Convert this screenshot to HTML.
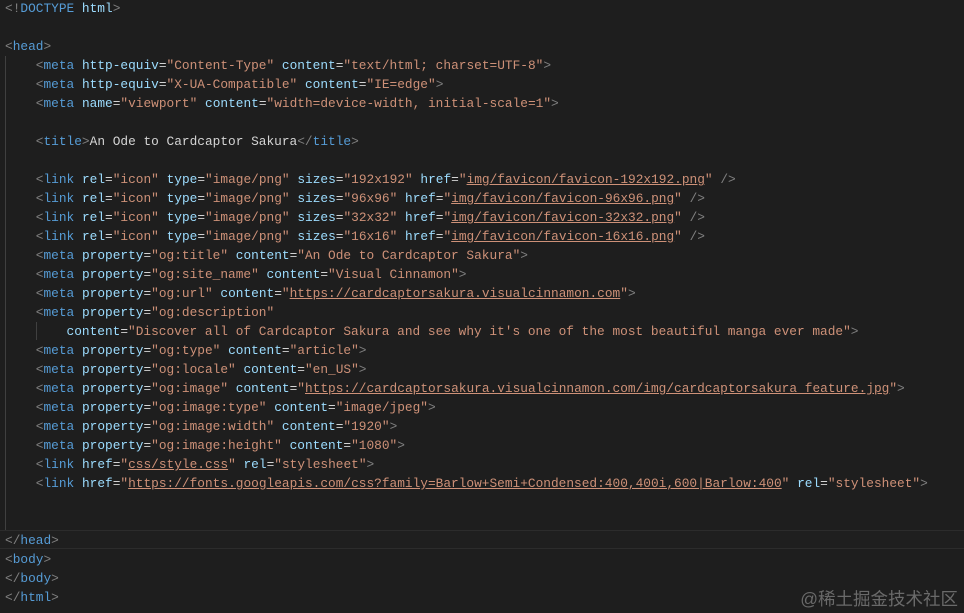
<!DOCTYPE html>
<html><head><meta charset="utf-8"><style>
html,body{margin:0;padding:0;background:#1e1e1e;width:964px;height:613px;overflow:hidden;position:relative}
pre{margin:0;position:absolute;left:5px;top:-1px;font-family:"Liberation Mono",monospace;font-size:12.82px;line-height:19px;color:#d4d4d4;white-space:pre}
.b{color:#808080}.t{color:#569cd6}.a{color:#9cdcfe}.s{color:#ce9178}.u{text-decoration:underline;text-decoration-color:#ce9178}
.g1{position:absolute;left:5px;top:56px;width:1px;height:474px;background:#404040}
.g2{position:absolute;left:36px;top:322px;width:1px;height:18px;background:#404040}
.cl{position:absolute;left:0;top:530px;width:964px;height:17px;border-top:1px solid #2c2c2c;border-bottom:1px solid #2c2c2c;background:#1f1f1f}
.wm{position:absolute;right:6px;top:586px;font-family:"Liberation Sans","Noto Sans CJK SC",sans-serif;font-size:17.5px;color:#6a6a6a}
</style></head><body>
<div class="cl"></div><div class="g1"></div><div class="g2"></div>
<pre><span class="b">&lt;!</span><span class="t">DOCTYPE</span> <span class="a">html</span><span class="b">&gt;</span>

<span class="b">&lt;</span><span class="t">head</span><span class="b">&gt;</span>
    <span class="b">&lt;</span><span class="t">meta</span> <span class="a">http-equiv</span>=<span class="s">"Content-Type"</span> <span class="a">content</span>=<span class="s">"text/html; charset=UTF-8"</span><span class="b">&gt;</span>
    <span class="b">&lt;</span><span class="t">meta</span> <span class="a">http-equiv</span>=<span class="s">"X-UA-Compatible"</span> <span class="a">content</span>=<span class="s">"IE=edge"</span><span class="b">&gt;</span>
    <span class="b">&lt;</span><span class="t">meta</span> <span class="a">name</span>=<span class="s">"viewport"</span> <span class="a">content</span>=<span class="s">"width=device-width, initial-scale=1"</span><span class="b">&gt;</span>

    <span class="b">&lt;</span><span class="t">title</span><span class="b">&gt;</span>An Ode to Cardcaptor Sakura<span class="b">&lt;/</span><span class="t">title</span><span class="b">&gt;</span>

    <span class="b">&lt;</span><span class="t">link</span> <span class="a">rel</span>=<span class="s">"icon"</span> <span class="a">type</span>=<span class="s">"image/png"</span> <span class="a">sizes</span>=<span class="s">"192x192"</span> <span class="a">href</span>=<span class="s">"<span class="u">img/favicon/favicon-192x192.png</span>"</span> <span class="b">/&gt;</span>
    <span class="b">&lt;</span><span class="t">link</span> <span class="a">rel</span>=<span class="s">"icon"</span> <span class="a">type</span>=<span class="s">"image/png"</span> <span class="a">sizes</span>=<span class="s">"96x96"</span> <span class="a">href</span>=<span class="s">"<span class="u">img/favicon/favicon-96x96.png</span>"</span> <span class="b">/&gt;</span>
    <span class="b">&lt;</span><span class="t">link</span> <span class="a">rel</span>=<span class="s">"icon"</span> <span class="a">type</span>=<span class="s">"image/png"</span> <span class="a">sizes</span>=<span class="s">"32x32"</span> <span class="a">href</span>=<span class="s">"<span class="u">img/favicon/favicon-32x32.png</span>"</span> <span class="b">/&gt;</span>
    <span class="b">&lt;</span><span class="t">link</span> <span class="a">rel</span>=<span class="s">"icon"</span> <span class="a">type</span>=<span class="s">"image/png"</span> <span class="a">sizes</span>=<span class="s">"16x16"</span> <span class="a">href</span>=<span class="s">"<span class="u">img/favicon/favicon-16x16.png</span>"</span> <span class="b">/&gt;</span>
    <span class="b">&lt;</span><span class="t">meta</span> <span class="a">property</span>=<span class="s">"og:title"</span> <span class="a">content</span>=<span class="s">"An Ode to Cardcaptor Sakura"</span><span class="b">&gt;</span>
    <span class="b">&lt;</span><span class="t">meta</span> <span class="a">property</span>=<span class="s">"og:site_name"</span> <span class="a">content</span>=<span class="s">"Visual Cinnamon"</span><span class="b">&gt;</span>
    <span class="b">&lt;</span><span class="t">meta</span> <span class="a">property</span>=<span class="s">"og:url"</span> <span class="a">content</span>=<span class="s">"<span class="u">https://cardcaptorsakura.visualcinnamon.com</span>"</span><span class="b">&gt;</span>
    <span class="b">&lt;</span><span class="t">meta</span> <span class="a">property</span>=<span class="s">"og:description"</span>
        <span class="a">content</span>=<span class="s">"Discover all of Cardcaptor Sakura and see why it's one of the most beautiful manga ever made"</span><span class="b">&gt;</span>
    <span class="b">&lt;</span><span class="t">meta</span> <span class="a">property</span>=<span class="s">"og:type"</span> <span class="a">content</span>=<span class="s">"article"</span><span class="b">&gt;</span>
    <span class="b">&lt;</span><span class="t">meta</span> <span class="a">property</span>=<span class="s">"og:locale"</span> <span class="a">content</span>=<span class="s">"en_US"</span><span class="b">&gt;</span>
    <span class="b">&lt;</span><span class="t">meta</span> <span class="a">property</span>=<span class="s">"og:image"</span> <span class="a">content</span>=<span class="s">"<span class="u">https://cardcaptorsakura.visualcinnamon.com/img/cardcaptorsakura_feature.jpg</span>"</span><span class="b">&gt;</span>
    <span class="b">&lt;</span><span class="t">meta</span> <span class="a">property</span>=<span class="s">"og:image:type"</span> <span class="a">content</span>=<span class="s">"image/jpeg"</span><span class="b">&gt;</span>
    <span class="b">&lt;</span><span class="t">meta</span> <span class="a">property</span>=<span class="s">"og:image:width"</span> <span class="a">content</span>=<span class="s">"1920"</span><span class="b">&gt;</span>
    <span class="b">&lt;</span><span class="t">meta</span> <span class="a">property</span>=<span class="s">"og:image:height"</span> <span class="a">content</span>=<span class="s">"1080"</span><span class="b">&gt;</span>
    <span class="b">&lt;</span><span class="t">link</span> <span class="a">href</span>=<span class="s">"<span class="u">css/style.css</span>"</span> <span class="a">rel</span>=<span class="s">"stylesheet"</span><span class="b">&gt;</span>
    <span class="b">&lt;</span><span class="t">link</span> <span class="a">href</span>=<span class="s">"<span class="u">https://fonts.googleapis.com/css?family=Barlow+Semi+Condensed:400,400i,600|Barlow:400</span>"</span> <span class="a">rel</span>=<span class="s">"stylesheet"</span><span class="b">&gt;</span>


<span class="b">&lt;/</span><span class="t">head</span><span class="b">&gt;</span>
<span class="b">&lt;</span><span class="t">body</span><span class="b">&gt;</span>
<span class="b">&lt;/</span><span class="t">body</span><span class="b">&gt;</span>
<span class="b">&lt;/</span><span class="t">html</span><span class="b">&gt;</span></pre>
<div class="wm">@稀土掘金技术社区</div>
</body></html>
